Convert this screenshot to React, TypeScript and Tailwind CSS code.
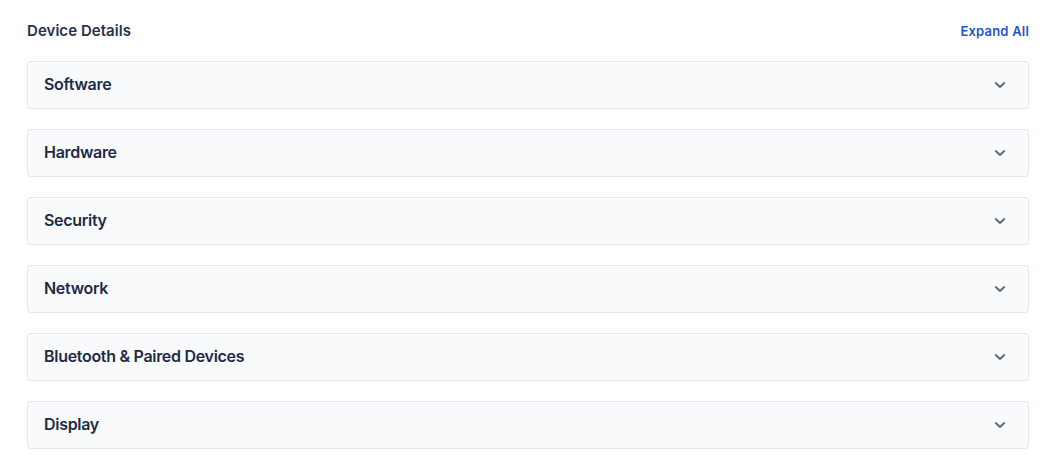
import React from "react";

const sections = [
  "Software",
  "Hardware",
  "Security",
  "Network",
  "Bluetooth & Paired Devices",
  "Display",
];

function Chevron() {
  return (
    <svg width="14" height="14" viewBox="0 0 14 14" fill="none">
      <path d="M2.75 5 7 9l4.25-4" stroke="#5f6673" strokeWidth="1.8" strokeLinecap="round" strokeLinejoin="round" />
    </svg>
  );
}

export default function App() {
  return (
    <div
      className="w-[1054px] h-[468px] bg-white pl-[27px] pr-[25px] pt-[20px]"
      style={{ fontFamily: "Inter, 'Noto Sans', sans-serif" }}
    >
      <div className="flex items-center justify-between h-[20px]">
        <h2 className="text-[15px] font-semibold text-[#28324b] tracking-[0.05px] leading-[20px] pt-[1px]">Device Details</h2>
        <button className="text-[13px] font-semibold text-[#1f55c8] tracking-[0.2px] leading-[20px] pt-[1px]">Expand All</button>
      </div>
      <div className="mt-[21px] flex flex-col gap-[20px]">
        {sections.map((s) => (
          <div
            key={s}
            className="h-[48px] flex items-center justify-between rounded-[4px] border border-[#e3e6ea] bg-[#f9fafc] pl-[16px] pr-[21px]"
          >
            <span className="text-[16px] font-semibold text-[#1f2b46] tracking-[-0.3px] leading-[20px] pb-[2px]">{s}</span>
            <Chevron />
          </div>
        ))}
      </div>
    </div>
  );
}
